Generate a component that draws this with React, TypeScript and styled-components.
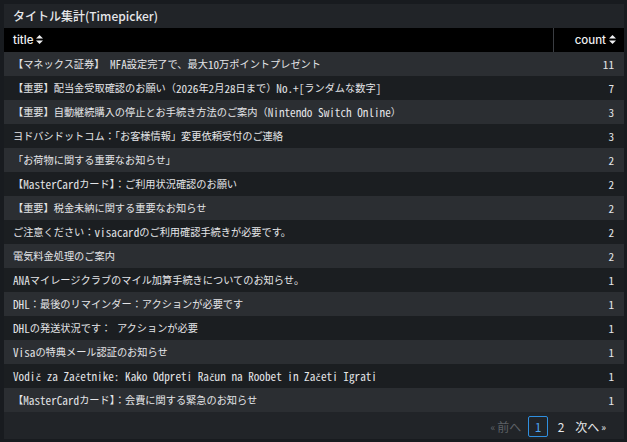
import * as React from 'react';
import styled, { createGlobalStyle } from 'styled-components';

const ROWS: Array<[string, number]> = [
  ['【マネックス証券】 MFA設定完了で、最大10万ポイントプレゼント', 11],
  ['【重要】配当金受取確認のお願い（2026年2月28日まで）No.+[ランダムな数字]', 7],
  ['【重要】自動継続購入の停止とお手続き方法のご案内（Nintendo Switch Online）', 3],
  ['ヨドバシドットコム：「お客様情報」変更依頼受付のご連絡', 3],
  ['「お荷物に関する重要なお知らせ」', 2],
  ['【MasterCardカード】：ご利用状況確認のお願い', 2],
  ['【重要】税金未納に関する重要なお知らせ', 2],
  ['ご注意ください：visacardのご利用確認手続きが必要です。', 2],
  ['電気料金処理のご案内', 2],
  ['ANAマイレージクラブのマイル加算手続きについてのお知らせ。', 1],
  ['DHL：最後のリマインダー：アクションが必要です', 1],
  ['DHLの発送状況です： アクションが必要', 1],
  ['Visaの特典メール認証のお知らせ', 1],
  ['Vodič za Začetnike: Kako Odpreti Račun na Roobet in Začeti Igrati', 1],
  ['【MasterCardカード】：会費に関する緊急のお知らせ', 1],
];

const GlobalStyle = createGlobalStyle`
  html, body {
    margin: 0;
    padding: 0;
    background: #181b1f;
  }
  body {
    font-family: Inter, "Noto Sans CJK JP", sans-serif;
  }
`;

const Canvas = styled.div`
  width: 627px;
  height: 442px;
  padding: 4px 3px 3px 4px;
  box-sizing: border-box;
  background: #181b1f;
`;

const Panel = styled.section`
  height: 100%;
  display: flex;
  flex-direction: column;
  background: #212428;
  overflow: hidden;
`;

const PanelTitle = styled.h2`
  margin: 0;
  height: 25px;
  padding: 0 9px;
  display: flex;
  align-items: center;
  font-size: 12px;
  font-weight: 500;
  color: #e6e7ea;
  font-family: "Noto Sans CJK JP", sans-serif;
`;

const Table = styled.div`
  display: flex;
  flex-direction: column;
`;

const HeaderRow = styled.div`
  display: grid;
  grid-template-columns: 1fr 71px;
  height: 24px;
  background: #000;
`;

const HeaderCell = styled.div<{ $right?: boolean }>`
  display: flex;
  align-items: center;
  gap: 3px;
  justify-content: ${(p) => (p.$right ? 'flex-end' : 'flex-start')};
  padding: 0 ${(p) => (p.$right ? '8px' : '9px')};
  font-size: 11.5px;
  font-weight: 500;
  color: #f0f1f3;
  border-left: ${(p) => (p.$right ? '1px solid #3a3d42' : 'none')};
`;

const Row = styled.div<{ $odd: boolean }>`
  display: grid;
  grid-template-columns: 1fr 71px;
  height: 24px;
  background: ${(p) => (p.$odd ? '#2b2e32' : '#1b1e21')};
`;

const Cell = styled.div<{ $right?: boolean }>`
  display: flex;
  align-items: center;
  justify-content: ${(p) => (p.$right ? 'flex-end' : 'flex-start')};
  padding: 0 ${(p) => (p.$right ? '10px' : '9px')};
  font-family: "Noto Sans CJK JP", sans-serif;
  font-size: 10.2px;
  color: #e4e5e8;
  white-space: pre;
  overflow: hidden;
`;

const Mono = styled.span`
  font-family: "Noto Sans Mono CJK JP", "DejaVu Sans Mono", monospace;
  font-size: 11.2px;
`;

const Accent = styled.span`
  font-family: "DejaVu Sans Mono", monospace;
  font-size: 9.4px;
`;

const Pager = styled.nav`
  display: flex;
  justify-content: flex-end;
  align-items: center;
  gap: 6px;
  padding: 3px 17px 0 0;
  height: 26px;
  font-family: "Noto Sans CJK JP", sans-serif;
  font-size: 12px;
`;

const PageLink = styled.span<{ $active?: boolean; $disabled?: boolean; $width?: number }>`
  min-width: ${(p) => p.$width ?? 0}px;
  height: 21px;
  box-sizing: border-box;
  display: flex;
  align-items: center;
  justify-content: center;
  gap: 2px;
  border-radius: 2px;
  border: 1px solid ${(p) => (p.$active ? '#2f8fe0' : 'transparent')};
  color: ${(p) => (p.$active ? '#4da3f0' : p.$disabled ? '#5d6166' : '#e6e7ea')};
`;

const Guillemet = styled.span`
  font-size: 10px;
`;

function SortIcon() {
  return (
    <svg width="7" height="9" viewBox="0 0 7 9" fill="currentColor">
      <path d="M3.5 0 L7 3.6 H0 Z" />
      <path d="M3.5 9 L7 5.4 H0 Z" />
    </svg>
  );
}

// latin runs are shown half-width mono, CJK runs in the gothic face
function Title({ text }: { text: string }) {
  const runs = text.match(/[\x20-\x7E\u00C0-\u017F]+|[^\x20-\x7E\u00C0-\u017F]+/g) ?? [];
  return (
    <>
      {runs.map((run, i) => {
        if (!/[\x20-\x7E\u00C0-\u017F]/.test(run[0])) return <React.Fragment key={i}>{run}</React.Fragment>;
        const parts = run.split('č');
        return (
          <Mono key={i}>
            {parts.map((p, j) => (
              <React.Fragment key={j}>
                {j > 0 && <Accent>č</Accent>}
                {p}
              </React.Fragment>
            ))}
          </Mono>
        );
      })}
    </>
  );
}

export default function App() {
  return (
    <Canvas>
      <GlobalStyle />
      <Panel>
        <PanelTitle>タイトル集計(Timepicker)</PanelTitle>
        <Table>
          <HeaderRow>
            <HeaderCell>
              title <SortIcon />
            </HeaderCell>
            <HeaderCell $right>
              count <SortIcon />
            </HeaderCell>
          </HeaderRow>
          {ROWS.map(([title, count], i) => (
            <Row key={i} $odd={i % 2 === 0}>
              <Cell>
                <Title text={title} />
              </Cell>
              <Cell $right>
                <Mono>{count}</Mono>
              </Cell>
            </Row>
          ))}
        </Table>
        <Pager>
          <PageLink $disabled>
            <Guillemet>«</Guillemet>前へ
          </PageLink>
          <PageLink $active $width={20}>1</PageLink>
          <PageLink $width={14}>2</PageLink>
          <PageLink>
            次へ<Guillemet>»</Guillemet>
          </PageLink>
        </Pager>
      </Panel>
    </Canvas>
  );
}
